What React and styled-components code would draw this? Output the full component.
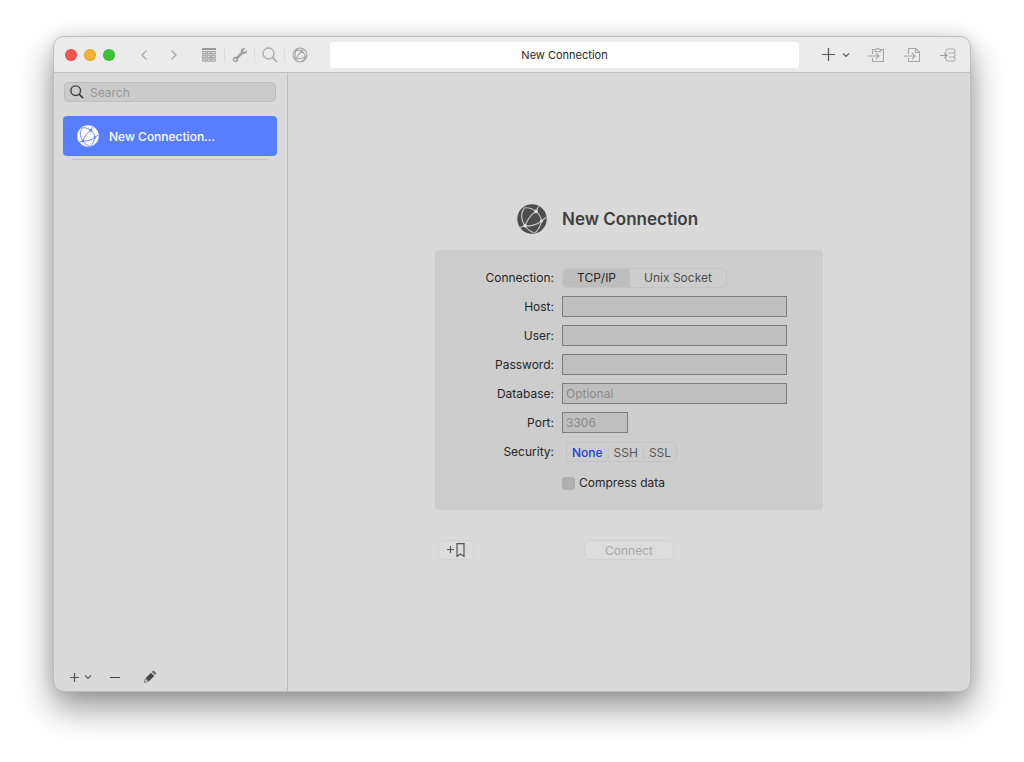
import React, { useState } from 'react';
import styled, { createGlobalStyle } from 'styled-components';

const App = () => {
  const [connectionType, setConnectionType] = useState('TCP/IP');
  const [security, setSecurity] = useState('None');

  return (
    <>
      <GlobalStyle />
      <Desktop>
        <AppWindow>
          <TitleBar>
            <TrafficLights>
              <Light $color="#f2544f" aria-label="Close" />
              <Light $color="#f3b32e" aria-label="Minimize" />
              <Light $color="#3cc234" aria-label="Zoom" />
            </TrafficLights>
            <NavButtons>
              <ToolButton aria-label="Back">
                <ChevronIcon d="M9.500 2.500 5 7l4.500 4.500" />
              </ToolButton>
              <ToolButton aria-label="Forward">
                <ChevronIcon d="M4.500 2.500 9 7l-4.500 4.500" />
              </ToolButton>
            </NavButtons>
            <ViewButtons>
              <ToolButton aria-label="Table view">
                <TableIcon />
              </ToolButton>
              <ToolButton aria-label="Structure">
                <WrenchIcon />
              </ToolButton>
              <ToolButton aria-label="Find">
                <SearchIcon size={16} color="#a9a9a9" stroke={1.3} />
              </ToolButton>
              <ToolButton aria-label="Network">
                <GlobeOutlineIcon />
              </ToolButton>
            </ViewButtons>
            <LocationBar>New Connection</LocationBar>
            <ActionButtons>
              <AddButton aria-label="New">
                <PlusIcon size={15} />
                <CaretIcon />
              </AddButton>
              <ToolButton aria-label="Paste">
                <PasteIcon />
              </ToolButton>
              <ToolButton aria-label="Import file">
                <ImportFileIcon />
              </ToolButton>
              <ToolButton aria-label="Import database">
                <ImportDatabaseIcon />
              </ToolButton>
            </ActionButtons>
          </TitleBar>

          <Body>
            <Sidebar>
              <SearchBox>
                <SearchIcon size={14} color="#3f3f3f" stroke={1.6} />
                <SearchInput placeholder="Search" aria-label="Search" />
              </SearchBox>
              <ConnectionItem>
                <GlobeIcon size={22} fill="#fff" line="#587eff" node="#587eff" />
                New Connection...
              </ConnectionItem>
              <Divider />
              <SidebarFooter>
                <AddButton aria-label="Add favorite">
                  <PlusIcon size={11} />
                  <CaretIcon />
                </AddButton>
                <ToolButton aria-label="Remove favorite">
                  <MinusIcon />
                </ToolButton>
                <ToolButton aria-label="Edit favorite">
                  <PencilIcon />
                </ToolButton>
              </SidebarFooter>
            </Sidebar>

            <Main>
              <Heading>
                <GlobeIcon size={30} fill="#4d4d4d" line="#c4c4c4" node="#e4e4e4" />
                <Title>New Connection</Title>
              </Heading>
              <Panel>
                <Label as="span">Connection:</Label>
                <Segments role="radiogroup" aria-label="Connection">
                  {['TCP/IP', 'Unix Socket'].map(type => (
                    <Segment key={type} $active={type === connectionType}>
                      <HiddenRadio
                        name="connection"
                        checked={type === connectionType}
                        onChange={() => setConnectionType(type)}
                      />
                      {type}
                    </Segment>
                  ))}
                </Segments>

                <Label htmlFor="host">Host:</Label>
                <TextField id="host" />
                <Label htmlFor="user">User:</Label>
                <TextField id="user" />
                <Label htmlFor="password">Password:</Label>
                <TextField id="password" type="password" />
                <Label htmlFor="database">Database:</Label>
                <TextField id="database" placeholder="Optional" />
                <Label htmlFor="port">Port:</Label>
                <TextField id="port" placeholder="3306" $short />

                <Label as="span">Security:</Label>
                <SecurityGroup role="radiogroup" aria-label="Security">
                  {['None', 'SSH', 'SSL'].map(mode => (
                    <SecurityOption key={mode} $active={mode === security}>
                      <HiddenRadio
                        name="security"
                        checked={mode === security}
                        onChange={() => setSecurity(mode)}
                      />
                      {mode}
                    </SecurityOption>
                  ))}
                </SecurityGroup>

                <CheckLabel>
                  <Checkbox />
                  Compress data
                </CheckLabel>
              </Panel>
              <Actions>
                <BookmarkButton aria-label="Add to favorites">
                  <BookmarkIcon />
                </BookmarkButton>
                <ConnectButton disabled>Connect</ConnectButton>
              </Actions>
            </Main>
          </Body>
        </AppWindow>
      </Desktop>
    </>
  );
};

const ChevronIcon = ({ d }) => (
  <svg width="14" height="14" viewBox="0 0 14 14" fill="none">
    <path d={d} stroke="#a6a6a6" strokeWidth="1.3" />
  </svg>
);

const CaretIcon = () => (
  <svg width="8" height="6" viewBox="0 0 8 6" fill="none">
    <path d="M1 1.500 4 4.300l3-2.800" stroke="#666" strokeWidth="1.400" />
  </svg>
);

const PlusIcon = ({ size }) => (
  <svg width={size} height={size} viewBox={`0 0 ${size} ${size}`} fill="none">
    <path
      d={`M${size / 2} 1v${size - 2}M1 ${size / 2}h${size - 2}`}
      stroke="#555"
      strokeWidth="1.2"
    />
  </svg>
);

const MinusIcon = () => (
  <svg width="12" height="12" viewBox="0 0 12 12">
    <path d="M1 6.500h10" stroke="#444" strokeWidth="1.2" />
  </svg>
);

const PencilIcon = () => (
  <svg width="14" height="14" viewBox="0 0 14 14">
    <path d="M2.500 8.200 8 2.700l3.200 3.200-5.500 5.500z" fill="#484848" />
    <path d="m8.800 2 1-1c.4-.4 1-.4 1.400 0l1.700 1.700c.4.4.4 1 0 1.400l-1 1z" fill="#666" />
    <path d="M2.300 8.800 5.100 11.600 1.200 12.700z" fill="#d0d0d0" stroke="#777" strokeWidth=".8" />
  </svg>
);

const TableIcon = () => (
  <svg width="16" height="16" viewBox="0 0 16 16" fill="none">
    <path d="M1 2h14" stroke="#9a9a9a" strokeWidth="1.8" />
    <g stroke="#a2a2a2" strokeWidth="1.1">
      {[4.5, 8.2, 11.9].map(y =>
        [1.6, 6.2, 10.8].map(x => (
          <rect key={`${x}-${y}`} x={x} y={y} width="3.400" height="2.200" />
        ))
      )}
    </g>
  </svg>
);

const WrenchIcon = () => (
  <svg width="16" height="16" viewBox="0 0 16 16" fill="none">
    <path d="M4 12 11.500 4.500" stroke="#a0a0a0" strokeWidth="2.600" />
    <circle cx="3.500" cy="12.500" r="2" stroke="#a0a0a0" strokeWidth="1.500" />
    <path
      d="M13.500 1.200 11.300 3.300l.3 1.300 1.300.3 2.100-2.100c.7 2.200-.9 4.500-3.200 4.300-1.700-.1-3.200-1.300-3.100-3.200C8.800 1.800 11.200.4 13.500 1.200z"
      fill="#a0a0a0"
    />
  </svg>
);

const SearchIcon = ({ size, color, stroke }) => (
  <svg width={size} height={size} viewBox="0 0 16 16" fill="none">
    <circle cx="6.500" cy="6.500" r="5.500" stroke={color} strokeWidth={stroke} />
    <path d="m10.400 10.400 4.600 4.600" stroke={color} strokeWidth={stroke + 0.3} />
  </svg>
);

const GlobeOutlineIcon = () => (
  <svg width="16" height="16" viewBox="0 0 30 30" fill="none" stroke="#a2a2a2" strokeWidth="2">
    <circle cx="15" cy="15" r="13" />
    <path d="M18.500 8C14 11 10 16 7.500 22.500c6 .5 12-1 17.500-5C24 13.500 22 10.500 18.500 8zM6 7c4-1.500 9-1.500 12.500 1L21 4M7.500 22.500C4.500 17 5 11 9 4M25 17.500c-1 4-3 7-6 9.500" />
  </svg>
);

const GlobeIcon = ({ size, fill, line, node }) => (
  <svg width={size} height={size} viewBox="0 0 30 30" fill="none">
    <circle cx="15" cy="15" r="14.700" fill={fill} />
    <g stroke={line} strokeWidth="1.200">
      <path d="M19 7.400C14 10.500 10.500 15 8 21.800" />
      <path d="M8 21.800c6 .6 12-1.200 16.500-4.800" />
      <path d="M19 7.400c3 2.400 5 5.600 5.500 9.600" />
      <path d="M7.500 3.800C12 3.400 16 4.800 19 7.400L21.500 2.500" />
      <path d="M8 21.800C3.500 16 3.500 9 7.500 3.800" />
      <path d="M24.500 17c-.8 4.500-3 8.500-6.500 12M24.500 17l4.500-3.500M8 21.800 3 23.500M8 21.800c2 3.200 5 5.500 9 7" />
    </g>
    <g fill={node}>
      <circle cx="19" cy="7.400" r="1.800" />
      <circle cx="24.500" cy="17" r="1.500" />
      <circle cx="8" cy="21.800" r="1.800" />
    </g>
  </svg>
);

const PasteIcon = () => (
  <svg width="16" height="16" viewBox="0 0 16 16" fill="none" stroke="#a6a6a6" strokeWidth="1.100">
    <path d="M4.500 7V2.500h2M13 2.500h2.500v12h-11V11" />
    <path d="M7 4.500v-2h1.500a1.300 1.300 0 0 1 2.600 0h1.500v2z" />
    <path d="M0 9h11M8 6l3 3-3 3" />
  </svg>
);

const ImportFileIcon = () => (
  <svg width="16" height="16" viewBox="0 0 16 16" fill="none" stroke="#a6a6a6" strokeWidth="1.100">
    <path d="M4.500 7V1.500h7.500l3.500 3.500v9.500h-11V11" />
    <path d="M11.500 2v3.500H15" />
    <path d="M0 9h11M8 6l3 3-3 3" />
  </svg>
);

const ImportDatabaseIcon = () => (
  <svg width="16" height="16" viewBox="0 0 16 16" fill="none" stroke="#b0b0b0" strokeWidth="1.100">
    <path d="M6 5.500V3.500c0-1 .8-1.500 1.800-1.500h5.400c1 0 1.800.5 1.800 1.500v1c0 1-.8 1.500-1.800 1.500H8" />
    <path d="M13.200 6c1 0 1.800.5 1.800 1.500v1c0 1-.8 1.500-1.800 1.500H8.500" />
    <path d="M13.200 10c1 0 1.800.5 1.800 1.500v1c0 1-.8 1.500-1.800 1.500H7.800c-1 0-1.800-.5-1.800-1.500V11" />
    <path d="M0 8.500h7M4.500 6 7 8.500 4.500 11" stroke="#999" />
  </svg>
);

const BookmarkIcon = () => (
  <svg width="20" height="16" viewBox="0 0 20 16" fill="none" stroke="#555" strokeWidth="1.200">
    <path d="M1 7.500h7M4.500 4v7" />
    <path d="M11 1.600h7v12.700l-3.500-2.300-3.500 2.300z" />
  </svg>
);

const GlobalStyle = createGlobalStyle`
  * {
    box-sizing: border-box;
  }
  body {
    margin: 0;
    background: #fff;
    font-family: Inter, 'Liberation Sans', sans-serif;
    font-size: 12px;
    color: #262626;
  }
  button,
  input {
    font: inherit;
    color: inherit;
  }
`;

const Desktop = styled.div`
  display: flex;
  min-height: 100vh;
  padding: 36px 53px 70px;
`;

const AppWindow = styled.div`
  display: flex;
  flex: 1;
  flex-direction: column;
  min-width: 0;
  border: 1px solid #bcbcbc;
  border-radius: 11px;
  overflow: hidden;
  background: #dadada;
  box-shadow: 0 16px 34px rgba(0, 0, 0, 0.42), 0 0 14px rgba(0, 0, 0, 0.1);
`;

const TitleBar = styled.header`
  display: flex;
  align-items: center;
  height: 36px;
  padding: 0 12px 0 11px;
  border-bottom: 1px solid #c0c0c0;
  background: #ebebeb;
`;

const TrafficLights = styled.div`
  display: flex;
  gap: 7px;
`;

const Light = styled.button`
  width: 12px;
  height: 12px;
  padding: 0;
  border: 1px solid rgba(0, 0, 0, 0.08);
  border-radius: 50%;
  background: ${props => props.$color};
`;

const ToolButton = styled.button`
  display: flex;
  align-items: center;
  justify-content: center;
  width: 20px;
  height: 20px;
  padding: 0;
  border: 0;
  background: none;
`;

const NavButtons = styled.div`
  display: flex;
  gap: 10px;
  margin-left: 19px;
`;

const ViewButtons = styled.div`
  display: flex;
  margin-left: 10px;

  ${ToolButton} {
    width: 30px;
  }
  ${ToolButton} + ${ToolButton} {
    height: 14px;
    margin: 3px 0;
    border-left: 1px solid #dcdcdc;
  }
`;

const LocationBar = styled.div`
  flex: 1;
  height: 26px;
  margin: 0 22px 0 16px;
  border-radius: 3px;
  background: #fff;
  font-size: 11px;
  line-height: 26px;
  text-align: center;
`;

const ActionButtons = styled.div`
  display: flex;
  align-items: center;
  gap: 16px;
`;

const AddButton = styled.button`
  display: flex;
  align-items: center;
  gap: 6px;
  height: 20px;
  padding: 0;
  border: 0;
  background: none;
`;

const Body = styled.div`
  display: flex;
  flex: 1;
`;

const Sidebar = styled.aside`
  display: flex;
  flex-direction: column;
  flex: none;
  width: 234px;
  padding: 9px 10px 4px 9px;
  border-right: 1px solid #bdbdbd;
`;

const SearchBox = styled.label`
  display: flex;
  align-items: center;
  gap: 6px;
  height: 20px;
  margin: 0 1px;
  padding: 0 5px;
  border: 1px solid #bdbdbd;
  border-radius: 4px;
  background: #cbcbcb;
`;

const SearchInput = styled.input`
  flex: 1;
  min-width: 0;
  padding: 0;
  border: 0;
  outline: 0;
  background: none;

  &::placeholder {
    color: #979797;
  }
`;

const ConnectionItem = styled.button`
  display: flex;
  align-items: center;
  gap: 10px;
  height: 40px;
  margin-top: 14px;
  padding: 0 14px;
  border: 0;
  border-radius: 4px;
  background: #587eff;
  color: #fff;
  font-weight: 500;
`;

const Divider = styled.hr`
  align-self: stretch;
  height: 1px;
  margin: 3px 9px 0;
  border: 0;
  background: #c4c4c4;
`;

const SidebarFooter = styled.div`
  display: flex;
  align-items: center;
  gap: 15px;
  margin-top: auto;
  padding-left: 6px;

  ${AddButton} {
    gap: 4px;
    margin-right: -2px;
  }
`;

const Main = styled.main`
  display: flex;
  flex: 1;
  flex-direction: column;
  align-items: center;
  justify-content: center;
`;

const Heading = styled.div`
  display: flex;
  align-items: center;
  gap: 15px;
  width: 388px;
  padding-left: 82px;
`;

const Title = styled.h1`
  margin: 0;
  color: #404040;
  font-size: 17px;
  font-weight: 600;
`;

const Panel = styled.form`
  display: grid;
  grid-template-columns: 119px 225px;
  grid-auto-rows: 21px;
  gap: 8px;
  align-items: center;
  width: 388px;
  height: 260px;
  margin-top: 16px;
  padding: 17px 0 0;
  border-radius: 4px;
  background: #cdcdcd;
`;

const Label = styled.label`
  text-align: right;
`;

const TextField = styled.input`
  width: ${props => (props.$short ? '66px' : '100%')};
  height: 21px;
  padding: 0 3px;
  border: 1px solid #7c7c7c;
  border-radius: 0;
  background: #bfbfbf;

  &::placeholder {
    color: #8b8b8b;
  }
`;

const Segments = styled.div`
  display: flex;
  align-self: end;
  justify-self: start;
  height: 20px;
  border: 1px solid #c3c3c3;
  border-radius: 5px;
  overflow: hidden;
`;

const Segment = styled.label`
  padding: 0 14px;
  background: ${props => (props.$active ? '#bebebe' : 'transparent')};
  color: ${props => (props.$active ? '#262626' : '#4e4e4e')};
  line-height: 18px;
`;

const SecurityGroup = styled.div`
  display: flex;
  align-items: center;
  align-self: end;
  justify-self: start;
  height: 20px;
  margin-left: 4px;
  border: 1px solid #c3c3c3;
  border-radius: 4px;
`;

const SecurityOption = styled.label`
  padding: 0 5px;
  color: ${props => (props.$active ? '#1f3fe0' : '#555')};
  font-weight: ${props => (props.$active ? 500 : 400)};
  line-height: 13px;

  & + & {
    border-left: 1px solid #c2c2c2;
  }
`;

const HiddenRadio = styled.input.attrs({ type: 'radio' })`
  appearance: none;
  width: 0;
  height: 0;
  margin: 0;
`;

const CheckLabel = styled.label`
  display: flex;
  grid-column: 2;
  align-items: center;
  align-self: end;
  gap: 4px;
  line-height: 16px;
`;

const Checkbox = styled.input.attrs({ type: 'checkbox' })`
  appearance: none;
  width: 13px;
  height: 13px;
  margin: 0;
  border-radius: 3px;
  background: #b0b0b0;
`;

const Actions = styled.div`
  display: grid;
  grid-template-columns: 1fr auto 1fr;
  align-items: center;
  width: 388px;
  margin-top: 30px;
`;

const PushButton = styled.button`
  display: flex;
  align-items: center;
  justify-content: center;
  height: 20px;
  padding: 0;
  border: 1px solid #d1d1d1;
  border-radius: 5px;
  background: #dcdcdc;
`;

const BookmarkButton = styled(PushButton)`
  width: 36px;
  margin-left: 3px;
`;

const ConnectButton = styled(PushButton)`
  width: 90px;
  color: #a9a9a9;
`;

export default App;
